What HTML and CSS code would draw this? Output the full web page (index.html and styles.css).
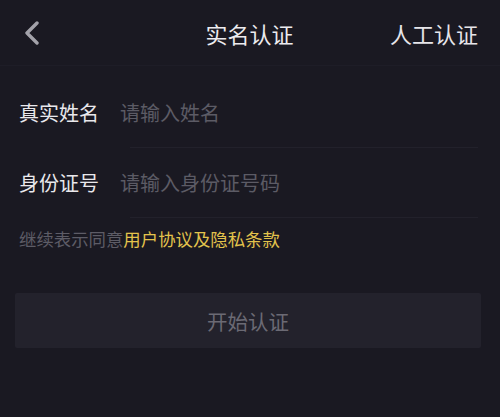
FILE: index.html
```html
<!DOCTYPE html>
<html lang="zh-CN">
<head>
<meta charset="utf-8">
<title>实名认证</title>
<link rel="stylesheet" href="styles.css">
</head>
<body>
<div class="page">
  <header class="topbar">
    <div class="back">
      <svg width="16" height="24" viewBox="0 0 16 24"><path d="M13 2 L3 12 L13 22" fill="none" stroke="#a3a2aa" stroke-width="3.4" stroke-linecap="round" stroke-linejoin="round"/></svg>
    </div>
    <div class="title">实名认证</div>
    <div class="action">人工认证</div>
  </header>
  <main class="form">
    <div class="row">
      <span class="label">真实姓名</span>
      <span class="field">请输入姓名</span>
    </div>
    <div class="row">
      <span class="label">身份证号</span>
      <span class="field">请输入身份证号码</span>
    </div>
    <p class="agree">继续表示同意<span class="link">用户协议及隐私条款</span></p>
    <div class="btn">开始认证</div>
  </main>
</div>
</body>
</html>
```

FILE: styles.css
```css
* { box-sizing: border-box; }
html, body {
  margin: 0;
  padding: 0;
  background: #1a1922;
}
body {
  font-family: "Noto Sans CJK SC", "Noto Sans", sans-serif;
  width: 500px;
  height: 417px;
  overflow: hidden;
}
.page {
  width: 500px;
  height: 417px;
  background: #1a1922;
}
.topbar {
  height: 66px;
  display: grid;
  grid-template-columns: 1fr auto 1fr;
  align-items: center;
  padding: 0 22px 0 24px;
  border-bottom: 1px solid #1e1d27;
}
.back {
  display: flex;
  align-items: center;
  height: 24px;
}
.title {
  font-size: 22px;
  color: #ecebef;
  line-height: 1;
  margin-left: -3px;
}
.action {
  justify-self: end;
  font-size: 22px;
  color: #e6e5ea;
  line-height: 1;
}
.form {
  padding: 12px 0 0 19px;
}
.row {
  height: 70px;
  display: flex;
  align-items: center;
  border-bottom: 1px solid transparent;
  position: relative;
}
.row::after {
  content: "";
  position: absolute;
  left: 111px;
  right: 22px;
  bottom: -1px;
  height: 1px;
  background: #22212b;
}
.label {
  width: 101px;
  font-size: 20px;
  color: #e9e8ec;
  line-height: 1;
}
.field {
  font-size: 20px;
  color: #5c5b65;
  line-height: 1;
}
.agree {
  margin: 9px 0 0 0;
  font-size: 17.4px;
  line-height: 24px;
  color: #5d5c66;
}
.link {
  color: #e3c34c;
}
.btn {
  margin: 42px 0 0 -4px;
  width: 466px;
  height: 55px;
  background: #23222c;
  border-radius: 2px;
  display: flex;
  align-items: center;
  justify-content: center;
  font-size: 20.5px;
  color: #6b6a74;
}
```
